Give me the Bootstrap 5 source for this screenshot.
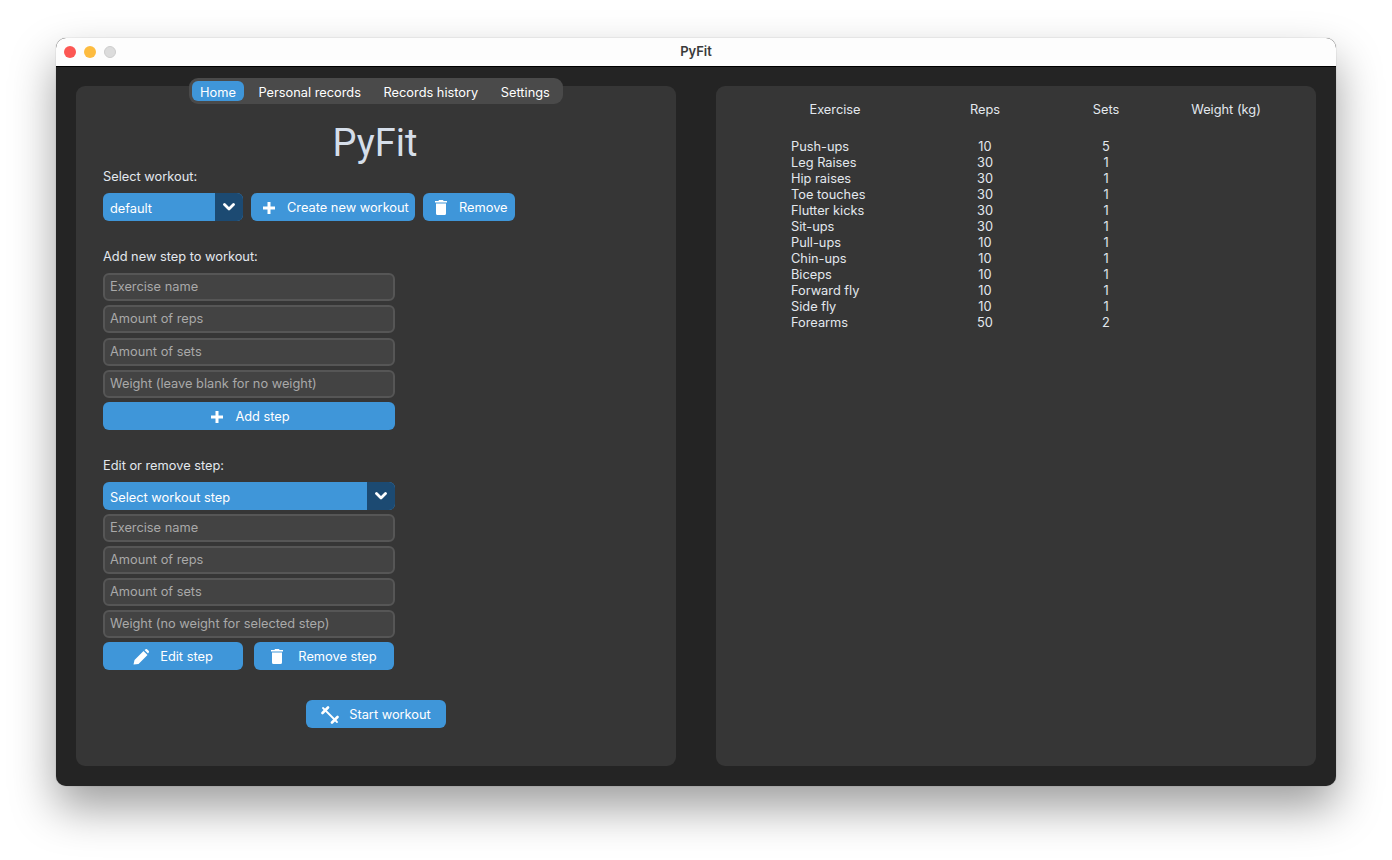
<!doctype html>
<html lang="en">
<head>
<meta charset="utf-8">
<title>PyFit</title>
<link href="https://cdn.jsdelivr.net/npm/bootstrap@5.3.0/dist/css/bootstrap.min.css" rel="stylesheet">
<style>
html,body{height:100%;}
body{background:#fff;font-family:Inter,"Liberation Sans",sans-serif;font-size:12.8px;color:#dce4ee;overflow:hidden;padding:38px 56px 0;}
.win{width:1280px;height:748px;border-radius:10px;background:#242424;box-shadow:0 0 1px rgba(0,0,0,.45),0 22px 45px rgba(0,0,0,.38);overflow:hidden;}
.tbar{height:29px;background:#fdfdfd;border-bottom:1px solid #000;padding:0 8px;position:relative;}
.tbar-t{font-weight:600;font-size:13px;color:#3a3a3a;line-height:26px;margin-bottom:2px;}
.dot{width:12px;height:12px;border-radius:50%;}
.d-r{background:#fc5753;}.d-y{background:#fdbc40;}.d-g{background:#dcdcdc;border:1px solid #cdcdcd;}
.stage{padding:19px 20px 20px;gap:40px;height:719px;}
.panel{width:600px;height:680px;background:#363636;border-radius:9px;position:relative;}
.seg{position:absolute;left:113px;top:-8px;width:374px;height:26px;background:#4a4a4a;border-radius:9px;padding:3px;}
.seg-i{height:20px;line-height:24px;color:#fff;padding:0 8px;border-radius:6px;white-space:nowrap;margin-right:6.6px;}
.seg-i.on{background:#3f96d9;}
.ptitle{font-family:Roboto,sans-serif;font-size:38px;line-height:44px;text-align:center;font-weight:400;padding:35px 2px 0 0;height:80px;color:#d5deea;margin:0;}
.form{padding:0 27px;}
.lbl{line-height:18px;color:#e3e8ee;height:16px;margin-top:27px;margin-bottom:9px;}
.lbl-first{margin-top:2px;}
.top-row{gap:8px;}
.pbtn{background:#3f96d9;color:#fff;height:28px;border-radius:6px;border:0;padding:1px 0 0;font-size:12.8px;gap:11px;}
.pbtn:hover,.pbtn:focus{background:#3f96d9;color:#fff;}
.pbtn-l{padding-left:12px;}
.w-140{width:140px;}.w-164{width:164px;}.w-92{width:92px;}.w-292{width:292px;}
.shift-l{padding-left:3px;}
.txt-1{margin-left:1px;}.txt-4{margin-left:4px;}
.cmb{height:28px;border-radius:6px;background:#3f96d9;color:#fff;overflow:hidden;}
.cmb-step{margin-bottom:4px;}
.cmb-t{padding-left:7px;line-height:32px;}
.cmb-a{width:28px;background:#1c4a72;}
.fld{display:block;width:292px;height:28px;background:#434343;border:2px solid #565656;border-radius:6px;padding:0 5px 2px;font-size:12.8px;color:#dce4ee;outline:0;margin-bottom:4px;}
.fld.fld-w{margin-bottom:5px;}
.fld::placeholder{color:#a9a9a9;opacity:1;}
.btn-pair{gap:11px;}
.start-row{margin:30px -27px 0;}
.start-btn{gap:10px;}
.rowx{line-height:16px;color:#e3e8ee;padding:16px 0 0 75px;}
.gridx{display:grid;grid-template-columns:134px 120px 122px 118px;}
.gridx.gridx-h{margin-bottom:21px;}
.gridx > div{text-align:center;}
.gridx > div:first-child{text-align:left;}
.hcell{width:88px;text-align:center;}
.ic{flex:none;}
</style>
</head>
<body>
<div class="win">
  <div class="tbar d-flex align-items-center justify-content-center">
    <div class="d-flex gap-2 position-absolute top-50 start-0 translate-middle-y ps-2"><span class="dot d-r"></span><span class="dot d-y"></span><span class="dot d-g"></span></div>
    <span class="tbar-t">PyFit</span>
  </div>
  <div class="stage d-flex">
    <section class="panel">
      <nav class="seg d-flex">
        <span class="seg-i on">Home</span><span class="seg-i">Personal records</span><span class="seg-i">Records history</span><span class="seg-i">Settings</span>
      </nav>
      <h1 class="ptitle">PyFit</h1>
      <div class="form">
        <div class="lbl lbl-first">Select workout:</div>
        <div class="d-flex top-row">
          <div class="cmb d-flex w-140"><span class="cmb-t flex-grow-1">default</span><span class="cmb-a d-flex align-items-center justify-content-center"><svg width="12" height="8" viewBox="0 0 12 8"><path d="M1.500 1.500 6 6l4.500-4.500" fill="none" stroke="#fff" stroke-width="2.800" stroke-linecap="round" stroke-linejoin="round"/></svg></span></div>
          <button class="btn pbtn pbtn-l d-flex align-items-center w-164"><svg class="ic" width="12" height="12" viewBox="0 0 12 12"><path d="M6 0v12M0 6h12" stroke="#fff" stroke-width="3"/></svg><span class="txt-1">Create new workout</span></button>
          <button class="btn pbtn pbtn-l d-flex align-items-center w-92"><svg class="ic" width="12" height="15" viewBox="0 0 12 15"><path d="M4 0h4l.6 1H12v1.600H0V1h3.400zM1 3.600h10v9.900a1.500 1.500 0 0 1-1.500 1.500h-7A1.500 1.500 0 0 1 1 13.500z" fill="#fff"/></svg><span class="txt-1">Remove</span></button>
        </div>
        <div class="lbl">Add new step to workout:</div>
        <input class="fld" placeholder="Exercise name">
        <input class="fld fld-w" placeholder="Amount of reps">
        <input class="fld" placeholder="Amount of sets">
        <input class="fld" placeholder="Weight (leave blank for no weight)">
        <button class="btn pbtn d-flex align-items-center justify-content-center w-292 shift-l"><svg class="ic" width="12" height="12" viewBox="0 0 12 12"><path d="M6 0v12M0 6h12" stroke="#fff" stroke-width="3"/></svg><span class="txt-1">Add step</span></button>
        <div class="lbl">Edit or remove step:</div>
        <div class="cmb cmb-step d-flex w-292"><span class="cmb-t flex-grow-1">Select workout step</span><span class="cmb-a d-flex align-items-center justify-content-center"><svg width="12" height="8" viewBox="0 0 12 8"><path d="M1.500 1.500 6 6l4.500-4.500" fill="none" stroke="#fff" stroke-width="2.800" stroke-linecap="round" stroke-linejoin="round"/></svg></span></div>
        <input class="fld" placeholder="Exercise name">
        <input class="fld" placeholder="Amount of reps">
        <input class="fld" placeholder="Amount of sets">
        <input class="fld" placeholder="Weight (no weight for selected step)">
        <div class="d-flex btn-pair">
          <button class="btn pbtn d-flex align-items-center justify-content-center w-140"><svg class="ic" width="16" height="16" viewBox="0 0 16 16"><path d="M0.500 15.500 1.500 11 10.500 2l4 4-9 9zM11.500 1l.8-.6a1.500 1.500 0 0 1 2 0l1.300 1.300a1.500 1.500 0 0 1 0 2L15 4.500z" fill="#fff"/></svg><span>Edit step</span></button>
          <button class="btn pbtn d-flex align-items-center justify-content-center w-140"><svg class="ic" width="12" height="15" viewBox="0 0 12 15"><path d="M4 0h4l.6 1H12v1.600H0V1h3.400zM1 3.600h10v9.900a1.500 1.500 0 0 1-1.500 1.500h-7A1.500 1.500 0 0 1 1 13.500z" fill="#fff"/></svg><span class="txt-4">Remove step</span></button>
        </div>
        <div class="d-flex justify-content-center start-row">
          <button class="btn pbtn start-btn d-flex align-items-center justify-content-center w-140"><svg class="ic" width="18" height="18" viewBox="0 0 18 18"><path d="M2 2l14 14" stroke="#fff" stroke-width="1.800" stroke-linecap="round"/><path d="M1.500 7 7 1.500M11 16.500 16.500 11" stroke="#fff" stroke-width="2.600" stroke-linecap="round"/></svg><span>Start workout</span></button>
        </div>
      </div>
    </section>
    <section class="panel">
      <div class="rowx">
        <div class="gridx gridx-h"><div><div class="hcell">Exercise</div></div><div>Reps</div><div>Sets</div><div>Weight (kg)</div></div>
        <div class="gridx"><div>Push-ups</div><div>10</div><div>5</div><div></div></div>
        <div class="gridx"><div>Leg Raises</div><div>30</div><div>1</div><div></div></div>
        <div class="gridx"><div>Hip raises</div><div>30</div><div>1</div><div></div></div>
        <div class="gridx"><div>Toe touches</div><div>30</div><div>1</div><div></div></div>
        <div class="gridx"><div>Flutter kicks</div><div>30</div><div>1</div><div></div></div>
        <div class="gridx"><div>Sit-ups</div><div>30</div><div>1</div><div></div></div>
        <div class="gridx"><div>Pull-ups</div><div>10</div><div>1</div><div></div></div>
        <div class="gridx"><div>Chin-ups</div><div>10</div><div>1</div><div></div></div>
        <div class="gridx"><div>Biceps</div><div>10</div><div>1</div><div></div></div>
        <div class="gridx"><div>Forward fly</div><div>10</div><div>1</div><div></div></div>
        <div class="gridx"><div>Side fly</div><div>10</div><div>1</div><div></div></div>
        <div class="gridx"><div>Forearms</div><div>50</div><div>2</div><div></div></div>
      </div>
    </section>
  </div>
</div>
<script src="https://cdn.jsdelivr.net/npm/bootstrap@5.3.0/dist/js/bootstrap.bundle.min.js"></script>
</body>
</html>
